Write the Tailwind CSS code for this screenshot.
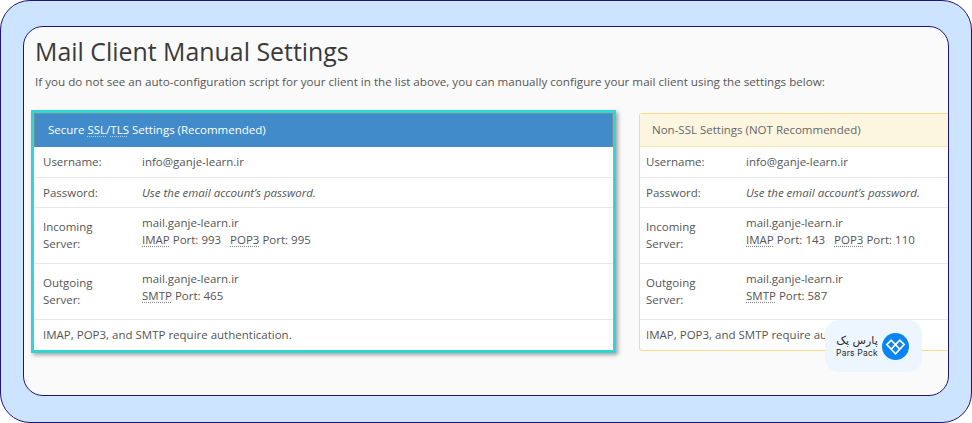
<!DOCTYPE html>
<html lang="en">
<head>
    <meta charset="UTF-8">
    <title>Mail Client Manual Settings</title>
    <script src="https://cdn.jsdelivr.net/npm/@tailwindcss/browser@4"></script>
</head>
<body class="bg-white font-['Open_Sans',sans-serif] overflow-hidden">
    <!-- Outer frame -->
    <div class="relative w-[972px] h-[423px] bg-[#cce4ff] border border-[#20147a] rounded-[30px] pt-[25px] pl-[22px]">
        <!-- Inner panel -->
        <div class="w-[926px] h-[370px] bg-[#fafafa] border border-[#20147a] rounded-[20px] overflow-hidden pl-[11px] pt-[6px]">
            <h1 class="text-[24.9px] leading-[36px] text-[#3a3a3a] whitespace-nowrap">Mail Client Manual Settings</h1>
            <p class="mt-[4px] text-[11.65px] leading-[18px] text-[#555] whitespace-nowrap">If you do not see an auto-configuration script for your client in the list above, you can manually configure your mail client using the settings below:</p>

            <div class="flex mt-[19px] items-start">
                <!-- Secure settings -->
                <div class="w-[585px] -ml-[4px] shrink-0 border-[3px] border-[#2fd6d6] bg-white shadow-[2px_2px_4px_rgba(0,0,0,0.35)] text-[11.5px] text-[#555]">
                    <div class="h-[34px] bg-[#428bca] border-t border-x border-[#7a8a96] px-[13px] pb-[2px] flex items-center text-white">
                        <span>Secure <abbr class="underline decoration-dotted decoration-white/60 underline-offset-2">SSL</abbr>/<abbr class="underline decoration-dotted decoration-white/60 underline-offset-2">TLS</abbr> Settings (Recommended)</span>
                    </div>
                    <div class="flex h-[31px] items-center px-[9px] pb-[1px] border-b border-[#e8e8e8]">
                        <div class="w-[99px]">Username:</div>
                        <div>info@ganje-learn.ir</div>
                    </div>
                    <div class="flex h-[30px] items-center px-[9px] border-b border-[#e8e8e8]">
                        <div class="w-[99px]">Password:</div>
                        <div class="italic">Use the email account’s password.</div>
                    </div>
                    <div class="flex h-[56px] px-[9px] pt-[6px] border-b border-[#e8e8e8] leading-[17px]">
                        <div class="w-[99px] pt-[4px]">Incoming<br>Server:</div>
                        <div>mail.ganje-learn.ir<br><abbr class="underline decoration-dotted decoration-[#888] underline-offset-2">IMAP</abbr> Port: 993 &nbsp; <abbr class="underline decoration-dotted decoration-[#888] underline-offset-2">POP3</abbr> Port: 995</div>
                    </div>
                    <div class="flex h-[56px] px-[9px] pt-[6px] border-b border-[#e8e8e8] leading-[17px]">
                        <div class="w-[99px] pt-[4px]">Outgoing<br>Server:</div>
                        <div>mail.ganje-learn.ir<br><abbr class="underline decoration-dotted decoration-[#888] underline-offset-2">SMTP</abbr> Port: 465</div>
                    </div>
                    <div class="flex h-[30px] items-center px-[9px]">IMAP, POP3, and SMTP require authentication.</div>
                </div>

                <!-- Non-SSL settings -->
                <div class="w-[400px] ml-[23px] mt-[3px] shrink-0 border border-[#fad98b] rounded-[3px] bg-white text-[11.5px] text-[#555]">
                    <div class="h-[33px] bg-[#fcf6e0] border-b border-[#fae6b0] px-[12px] pb-[1px] flex items-center text-[#666]">Non-SSL Settings (NOT Recommended)</div>
                    <div class="flex h-[31px] items-center px-[6px] pb-[1px] border-b border-[#e8e8e8]">
                        <div class="w-[100px]">Username:</div>
                        <div>info@ganje-learn.ir</div>
                    </div>
                    <div class="flex h-[30px] items-center px-[6px] border-b border-[#e8e8e8]">
                        <div class="w-[100px]">Password:</div>
                        <div class="italic">Use the email account’s password.</div>
                    </div>
                    <div class="flex h-[56px] px-[6px] pt-[6px] border-b border-[#e8e8e8] leading-[17px]">
                        <div class="w-[100px] pt-[4px]">Incoming<br>Server:</div>
                        <div>mail.ganje-learn.ir<br><abbr class="underline decoration-dotted decoration-[#888] underline-offset-2">IMAP</abbr> Port: 143 &nbsp; <abbr class="underline decoration-dotted decoration-[#888] underline-offset-2">POP3</abbr> Port: 110</div>
                    </div>
                    <div class="flex h-[56px] px-[6px] pt-[6px] border-b border-[#e8e8e8] leading-[17px]">
                        <div class="w-[100px] pt-[4px]">Outgoing<br>Server:</div>
                        <div>mail.ganje-learn.ir<br><abbr class="underline decoration-dotted decoration-[#888] underline-offset-2">SMTP</abbr> Port: 587</div>
                    </div>
                    <div class="flex h-[30px] items-center px-[6px]">IMAP, POP3, and SMTP require authentication.</div>
                </div>
            </div>
        </div>

        <!-- Pars Pack badge -->
        <div class="absolute left-[824px] top-[319px] w-[97px] h-[52px] bg-[#edf6ff] rounded-[14px] flex items-center pl-[12px] gap-[5px]">
            <div class="w-[40px] text-[#2b2b2b] flex flex-col items-center gap-[3px]">
                <span class="text-[11px] leading-[11px] whitespace-nowrap font-['DejaVu_Sans',sans-serif]" dir="rtl">پارس پک</span>
                <span class="text-[8.5px] leading-[8px] whitespace-nowrap tracking-[0.2px] font-['Inter',sans-serif]">Pars Pack</span>
            </div>
            <svg width="27" height="27" viewBox="0 0 28 28">
                <circle cx="14" cy="14" r="14" fill="#0a84f5"/>
                <g fill="none" stroke="#fff" stroke-width="1.7">
                    <path d="M9.5 7.5 L14 12 L18.5 7.5 L23 12 L14 21.5 L5 12 Z"/>
                    <path d="M9.5 16.8 L14 12 L18.5 16.8"/>
                </g>
            </svg>
        </div>
    </div>
</body>
</html>
